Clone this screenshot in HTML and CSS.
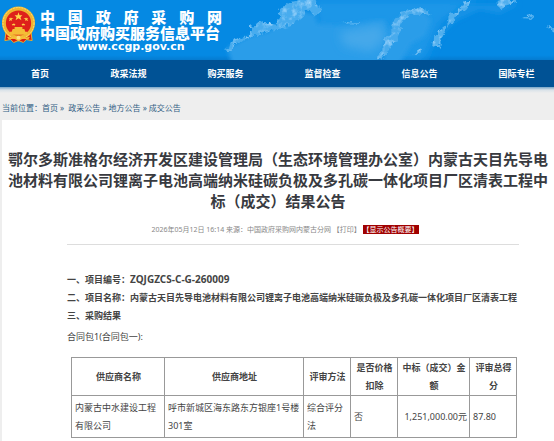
FILE: index.html
```html
<!DOCTYPE html>
<html lang="zh-CN">
<head>
<meta charset="utf-8">
<meta name="viewport" content="width=device-width, initial-scale=1">
<title>中国政府采购网</title>
<link rel="stylesheet" href="styles.css">
</head>
<body>
<header class="banner">
  <svg class="sky" viewBox="200 0 354 60" preserveAspectRatio="none" aria-hidden="true">
    <defs>
      <filter id="rough" x="-10%" y="-10%" width="120%" height="120%" color-interpolation-filters="sRGB">
        <feTurbulence type="fractalNoise" baseFrequency="0.15" numOctaves="4" seed="8" result="n"/>
        <feDisplacementMap in="SourceGraphic" in2="n" scale="9" xChannelSelector="R" yChannelSelector="G" result="shape"/>
        <feColorMatrix in="n" type="matrix" values="0 0 0 0 0.7  0 0 0 0 0.87  0 0 0 0 1  0 0 2 0 -0.9" result="grain"/>
        <feComposite in="grain" in2="shape" operator="in" result="tex"/>
        <feMerge result="m"><feMergeNode in="shape"/><feMergeNode in="tex"/></feMerge>
        <feGaussianBlur in="m" stdDeviation="0.7"/>
      </filter>
      <filter id="haze" x="-20%" y="-20%" width="140%" height="140%"><feGaussianBlur stdDeviation="5"/></filter>
      <filter id="edge" x="-20%" y="-20%" width="140%" height="140%"><feGaussianBlur stdDeviation="2"/></filter>
    </defs>
    <path filter="url(#haze)" fill="#1f97e8" d="M310 0H480L442 22 425 60H240V48L270 32 320 22Z"/>
    <path filter="url(#edge)" fill="#2a9de9" d="M233 64 228 48 251 36 270 32 282 20 300 10 316 14 318 24 350 26 385 20 390 34 378 64Z"/>
    <path filter="url(#haze)" fill="#44a8ea" d="M340 32 382 24 386 40 372 52 345 46Z"/>
    <path filter="url(#edge)" fill="#2b9de9" d="M384 64 388 34 396 20 410 12 424 12 432 20 426 36 412 44 400 64Z"/>
    <path filter="url(#edge)" fill="#1792e6" d="M440 40 449 20 464 4H520L500 14 480 10 458 20 447 31Z"/>
    <g filter="url(#rough)">
      <path fill="#48acee" d="M227 50 229 44 240 38 251 36V27L264 22 279 24 280 10 291 1 308 -3 318 4 323 14 314 13 307 11 300 20 289 26 272 30 258 35 244 40 232 50Z"/>
      <path fill="#48abed" d="M384 50 383 39 392 33 392 23 399 15 411 9 424 8 434 15 424 14 410 14 402 25 400 36 391 47 382 60 378 58Z"/>
      <path fill="#50afee" d="M434 46 435 35 441 30 449 24 449 15 461 9 466 0H472L469 8 459 13 452 22 446 29 441 39V50ZM498 1 510 -3 516 3 508 5 499 8ZM415 54 422 48 424 50 420 54Z"/>
      <path fill="#4eafef" d="M339 23 347 22 360 22 359 24ZM522 18 533 16 532 19ZM547 26 556 30 556 33Z"/>
    </g>
  </svg>
  <div class="brand">
    <svg class="emblem" viewBox="0 0 36 38" role="img" aria-label="国徽">
      <path fill="#d91b17" stroke="#eeae25" d="M5 27 4 35 10 34 13 37 18 35 23 37 26 34 32 35 31 27Z"/>
      <circle cx="18" cy="17" r="15" fill="#de201b" stroke="#efb430" stroke-width="4"/>
      <circle cx="18" cy="17" r="16" fill="none" stroke="#ffdf75" stroke-width="1" stroke-dasharray="2 1"/>
      <path fill="#ffd64a" d="m18 6 1 3h3l-2 2 1 3-3-2-3 2 1-3-2-2h3ZM10 11l1 1h2l-2 1v2l-1-1-2 1 1-2-1-1h2ZM26 11l-1 1h-2l2 1v2l1-1 2 1-1-2 1-1h-2ZM13 17l1 1h1l-1 1v1l-1-1-1 1v-1l-1-1h2ZM23 17l-1 1h-1l1 1v1l1-1 1 1v-1l1-1h-2Z"/>
      <path fill="#f5bd36" d="M12 23h2v-2h8v2h2l1 3h2v3H9v-3h2ZM14 30h8l3 2 5-1-2 3-6-1-4 3-4-3-6 1-2-3 5 1Z"/>
      <circle cx="18" cy="32" r="2" fill="#ffe083"/>
    </svg>
    <div class="brand-text">
      <div class="site">中 国 政 府 采 购 网</div>
      <div class="platform">中国政府购买服务信息平台</div>
      <div class="domain">www.ccgp.gov.cn</div>
    </div>
  </div>
</header>
<nav class="menu">
  <div class="menu-items"><a href="#">首页</a><a href="#">政采法规</a><a href="#">购买服务</a><a href="#">监督检查</a><a href="#">信息公告</a><a href="#">国际专栏</a></div>
</nav>
<div class="crumbs">当前位置：<a href="#">首页</a> »&nbsp; <a href="#">政采公告</a> » <a href="#">地方公告</a> » <a href="#">成交公告</a></div>
<main class="notice">
  <h1>鄂尔多斯准格尔经济开发区建设管理局（生态环境管理办公室）内蒙古天目先导电池材料有限公司锂离子电池高端纳米硅碳负极及多孔碳一体化项目厂区清表工程中标（成交）结果公告</h1>
  <div class="meta">2026年05月12日 16:14 来源：中国政府采购网内蒙古分网 <a href="#">【打印】</a> <button type="button">【显示公告概要】</button></div>
  <article>
    <h2>一、项目编号：<span class="code">ZQJGZCS-C-G-260009</span></h2>
    <h2>二、项目名称：内蒙古天目先导电池材料有限公司锂离子电池高端纳米硅碳负极及多孔碳一体化项目厂区清表工程</h2>
    <h2>三、采购结果</h2>
    <p>合同包1(合同包一):</p>
    <table>
      <colgroup><col class="name"><col class="address"><col class="short"><col class="short"><col class="amount"><col class="short"></colgroup>
      <thead><tr><th>供应商名称</th><th>供应商地址</th><th>评审方法</th><th>是否价格扣除</th><th>中标（成交）金额</th><th>评审总得分</th></tr></thead>
      <tbody><tr><td>内蒙古中水建设工程有限公司</td><td>呼市新城区海东路东方银座1号楼301室</td><td>综合评分法</td><td>否</td><td class="money">1,251,000.00元</td><td>87.80</td></tr></tbody>
    </table>
  </article>
</main>
</body>
</html>
```
FILE: styles.css
```css
* { box-sizing: border-box; }
body {
  margin: 0;
  background: #eee;
  color: #444;
  font: 9px/18px "Noto Sans", "Noto Sans CJK SC", sans-serif;
}
a { color: inherit; text-decoration: none; }
.banner {
  position: relative;
  height: 60px;
  background: linear-gradient(#0589e3 92%, #057bd0);
  overflow: hidden;
}
.sky { position: absolute; right: 0; top: 0; width: 64%; height: 100%; }
.brand { position: relative; display: flex; gap: 4px; padding: 6px 0 0 1px; }
.emblem { width: 35px; height: 38px; }
.brand-text {
  width: 182px;
  padding-top: 2px;
  color: #fff;
  font-family: "Noto Sans CJK SC", sans-serif;
  font-weight: 900;
}
.site { font-size: 15px; line-height: 17px; text-align-last: justify; }
.platform { font-size: 15px; line-height: 16px; white-space: nowrap; }
.domain { font: bold 11px/12px "DejaVu Sans", sans-serif; text-align: center; }
.menu {
  height: 27px;
  overflow: hidden;
  background: #005295;
  color: #fff;
  font-weight: bold;
  line-height: 27px;
  text-align: center;
}
.menu-items {
  display: grid;
  grid-template-columns: 80fr 97fr 97fr 97fr 97fr 97fr;
  width: 102%;
}
.crumbs {
  padding: 12px 2px 3px;
  background: linear-gradient(#75a5c8, #d9e2e9 3px, #eee 6px);
  color: #335f85;
  font-size: 8px;
}
.notice { margin-left: 2px; padding: 29px 0 3px; background: #fff; }
h1 {
  margin: 0 5px;
  color: #383a40;
  font-size: 15px;
  line-height: 21px;
  text-align: center;
}
.meta {
  margin-top: 9px;
  padding-left: 14px;
  color: #888;
  font-size: 7px;
  line-height: 18px;
  text-align: center;
}
.meta button {
  padding: 0;
  border: 0;
  background: #a00000;
  color: #fff;
  font: 7px/9px "Noto Sans", "Noto Sans CJK SC", sans-serif;
}
article { margin: 5px 35px 0 65px; padding-top: 25px; border-top: 1px solid #ddd; }
h2 { margin: 0; font-size: 9px; line-height: 18px; white-space: nowrap; }
.code { font-size: 10px; }
p { margin: 3px 0 11px; }
table {
  width: 445px;
  max-width: 100%;
  margin-left: 4px;
  border-collapse: collapse;
  table-layout: fixed;
}
.name { width: 93px; }
.address { width: 139px; }
.short { width: 47px; }
.amount { width: 72px; }
th, td { padding: 1px 2px 0 3px; border: 1px solid #999; text-align: left; }
th { text-align: center; }
td { padding-top: 3px; padding-bottom: 2px; }
.money { text-align: right; }
```
